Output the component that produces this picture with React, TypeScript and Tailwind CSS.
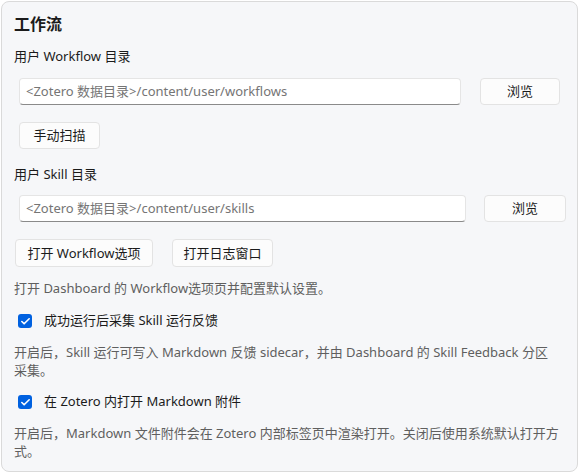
import { Check } from 'lucide-react'

const font = { fontFamily: '"Noto Sans", "Noto Sans CJK SC", sans-serif' }

function Btn({ children, className = '' }: { children: React.ReactNode; className?: string }) {
  return (
    <button className={`h-[27px] rounded-[4px] border border-[#e3e3e3] bg-[#fcfcfc] text-[13px] leading-none text-[#1b1b1b] ${className}`}>
      {children}
    </button>
  )
}

function PathInput({ value, width }: { value: string; width: string }) {
  return (
    <div className={`${width} h-[27px] rounded-[4px] border border-[#e5e5e5] border-b-[#8a8a8a] bg-white px-[6px] flex items-center text-[13px] text-[#757575] whitespace-nowrap`}>
      {value}
    </div>
  )
}

function CheckRow({ label }: { label: string }) {
  return (
    <div className="flex items-center h-[20px] pl-[4px]">
      <span className="w-[14px] h-[14px] rounded-[3px] bg-[#0061e0] flex items-center justify-center">
        <Check className="w-[11px] h-[11px] text-white" strokeWidth={3.5} />
      </span>
      <span className="ml-[12px] text-[13px] text-[#1b1b1b]">{label}</span>
    </div>
  )
}

export default function App() {
  return (
    <div className="w-[579px] h-[474px] bg-white pt-[1px] pl-[1px]" style={font}>
      <div className="w-[577px] h-[471px] rounded-lg border border-[#dadada] bg-[#f6f7f9] pl-[12px] pt-[12px] flex flex-col">
        <h2 className="h-[20px] leading-[20px] text-[16px] font-bold text-[#1b1b1b]">工作流</h2>

        <div className="mt-[12px] h-[20px] leading-[20px] text-[13px] text-[#1b1b1b]">用户 Workflow 目录</div>
        <div className="mt-[12px] ml-[5px] flex items-center">
          <PathInput value="<Zotero 数据目录>/content/user/workflows" width="w-[442px]" />
          <Btn className="ml-[19px] w-[80px]">浏览</Btn>
        </div>
        <div className="mt-[17px] ml-[5px]">
          <Btn className="w-[81px]">手动扫描</Btn>
        </div>

        <div className="mt-[15px] h-[20px] leading-[20px] text-[13px] text-[#1b1b1b]">用户 Skill 目录</div>
        <div className="mt-[11px] ml-[5px] flex items-center">
          <PathInput value="<Zotero 数据目录>/content/user/skills" width="w-[447px]" />
          <Btn className="ml-[18px] w-[82px]">浏览</Btn>
        </div>

        <div className="mt-[17px] ml-[1px] flex gap-[19px]">
          <Btn className="w-[138px] h-[28px]">打开 Workflow选项</Btn>
          <Btn className="w-[101px] h-[28px]">打开日志窗口</Btn>
        </div>

        <p className="mt-[11px] h-[20px] leading-[20px] text-[13px] text-[#5f5f5f] whitespace-nowrap">
          打开 Dashboard 的 Workflow选项页并配置默认设置。
        </p>

        <div className="mt-[13px]">
          <CheckRow label="成功运行后采集 Skill 运行反馈" />
        </div>
        <p className="mt-[12px] leading-[18px] text-[13px] text-[#5f5f5f] whitespace-nowrap">
          开启后，Skill 运行可写入 Markdown 反馈 sidecar，并由 Dashboard 的 Skill Feedback 分区<br />
          采集。
        </p>

        <div className="mt-[13px]">
          <CheckRow label="在 Zotero 内打开 Markdown 附件" />
        </div>
        <p className="mt-[12px] leading-[18px] text-[13px] text-[#5f5f5f] whitespace-nowrap">
          开启后，Markdown 文件附件会在 Zotero 内部标签页中渲染打开。关闭后使用系统默认打开方<br />
          式。
        </p>
      </div>
    </div>
  )
}
